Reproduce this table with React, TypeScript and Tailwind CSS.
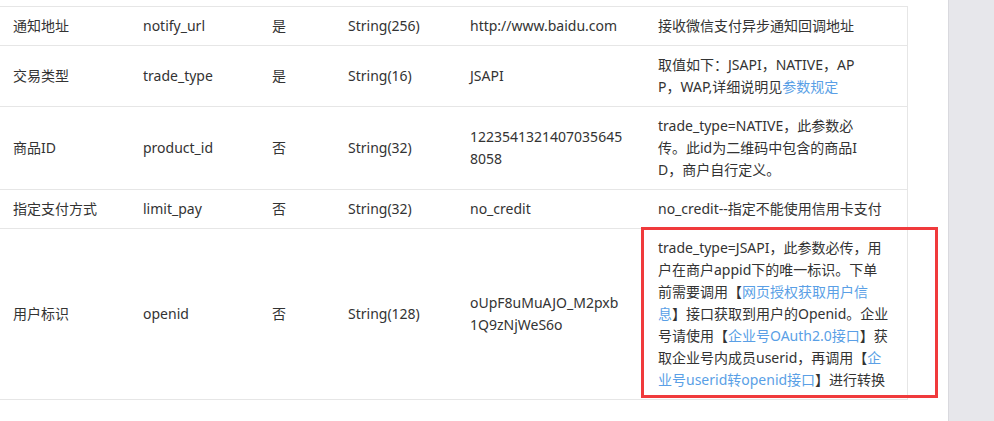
import type { ReactNode } from "react";

const Link = ({ children }: { children: ReactNode }) => (
  <a className="text-[#5a9fe6] cursor-pointer">{children}</a>
);

type Row = {
  name: string;
  field: string;
  required: string;
  type: string;
  sample: ReactNode[];
  desc: ReactNode[];
};

const rows: Row[] = [
  {
    name: "通知地址",
    field: "notify_url",
    required: "是",
    type: "String(256)",
    sample: ["http://www.baidu.com"],
    desc: ["接收微信支付异步通知回调地址"],
  },
  {
    name: "交易类型",
    field: "trade_type",
    required: "是",
    type: "String(16)",
    sample: ["JSAPI"],
    desc: [
      "取值如下：JSAPI，NATIVE，AP",
      <>
        P，WAP,详细说明见<Link>参数规定</Link>
      </>,
    ],
  },
  {
    name: "商品ID",
    field: "product_id",
    required: "否",
    type: "String(32)",
    sample: ["1223541321407035645", "8058"],
    desc: [
      "trade_type=NATIVE，此参数必",
      "传。此id为二维码中包含的商品I",
      "D，商户自行定义。",
    ],
  },
  {
    name: "指定支付方式",
    field: "limit_pay",
    required: "否",
    type: "String(32)",
    sample: ["no_credit"],
    desc: ["no_credit--指定不能使用信用卡支付"],
  },
  {
    name: "用户标识",
    field: "openid",
    required: "否",
    type: "String(128)",
    sample: ["oUpF8uMuAJO_M2pxb", "1Q9zNjWeS6o"],
    desc: [
      "trade_type=JSAPI，此参数必传，用",
      "户在商户appid下的唯一标识。下单",
      <>
        前需要调用【<Link>网页授权获取用户信</Link>
      </>,
      <>
        <Link>息</Link>】接口获取到用户的Openid。企业
      </>,
      <>
        号请使用【<Link>企业号OAuth2.0接口</Link>】获
      </>,
      <>
        取企业号内成员userid，再调用【<Link>企</Link>
      </>,
      <>
        <Link>业号userid转openid接口</Link>】进行转换
      </>,
    ],
  },
];

const Lines = ({ lines }: { lines: ReactNode[] }) => (
  <div className="flex flex-col">
    {lines.map((line, i) => (
      <span key={i} className="whitespace-nowrap">
        {line}
      </span>
    ))}
  </div>
);

export default function App() {
  return (
    <div className="flex h-screen bg-white font-['Noto_Sans','Noto_Sans_CJK_SC',sans-serif] text-[14px] leading-[22px] text-[#333]">
      <div className="relative flex-1 pt-[6px]">
        <table className="table-fixed w-[908px] border-t border-r border-[#e6e6e6]">
          <colgroup>
            <col className="w-[130px]" />
            <col className="w-[129px]" />
            <col className="w-[76px]" />
            <col className="w-[122px]" />
            <col className="w-[188px]" />
            <col />
          </colgroup>
          <tbody>
            {rows.map((row) => (
              <tr key={row.field} className="border-b border-[#e6e6e6]">
                <td className="pl-[13px] py-2 align-middle">{row.name}</td>
                <td className="pl-[13px] py-2 align-middle">{row.field}</td>
                <td className="pl-[13px] py-2 align-middle">{row.required}</td>
                <td className="pl-[13px] py-2 align-middle">{row.type}</td>
                <td className="pl-[13px] py-2 align-middle">
                  <Lines lines={row.sample} />
                </td>
                <td className="pl-[13px] py-2 align-middle">
                  <Lines lines={row.desc} />
                </td>
              </tr>
            ))}
          </tbody>
        </table>
        {/* annotation box around the openid description */}
        <div className="absolute left-[641px] top-[227px] w-[297px] h-[171px] border-[3px] border-[#f03a3c] pointer-events-none" />
      </div>
      <div className="w-[46px] bg-[#e7e7eb] border-l border-[#d9d9de]" />
    </div>
  );
}
